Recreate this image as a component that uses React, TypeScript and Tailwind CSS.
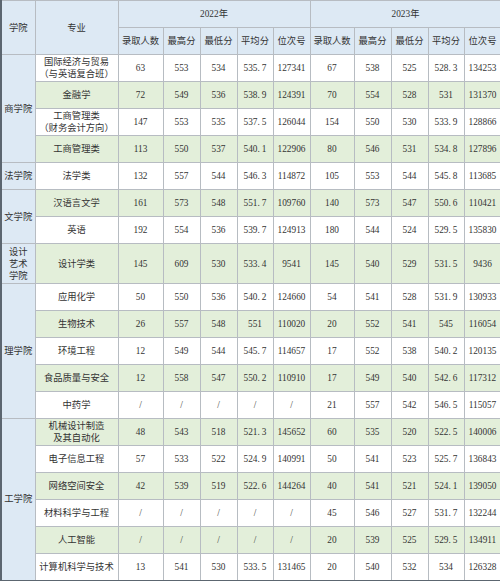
import type { ReactNode } from "react";

type Row = {
  major: ReactNode;
  y22: string[];
  y23: string[];
  green: boolean;
  college?: { label: ReactNode; span: number };
  tall?: boolean;
};

const SLASH = ["/", "/", "/", "/", "/"];

const rows: Row[] = [
  {
    major: (
      <>
        国际经济与贸易
        <br />
        （与英语复合班）
      </>
    ),
    y22: ["63", "553", "534", "535.7", "127341"],
    y23: ["67", "538", "525", "528.3", "134253"],
    green: false,
    college: { label: "商学院", span: 4 },
  },
  {
    major: "金融学",
    y22: ["72", "549", "536", "538.9", "124391"],
    y23: ["70", "554", "528", "531", "131370"],
    green: true,
  },
  {
    major: (
      <>
        工商管理类
        <br />
        （财务会计方向）
      </>
    ),
    y22: ["147", "553", "535", "537.5", "126044"],
    y23: ["154", "550", "530", "533.9", "128866"],
    green: false,
  },
  {
    major: "工商管理类",
    y22: ["113", "550", "537", "540.1", "122906"],
    y23: ["80", "546", "531", "534.8", "127896"],
    green: true,
  },
  {
    major: "法学类",
    y22: ["132", "557", "544", "546.3", "114872"],
    y23: ["105", "553", "544", "545.8", "113685"],
    green: false,
    college: { label: "法学院", span: 1 },
  },
  {
    major: "汉语言文学",
    y22: ["161", "573", "548", "551.7", "109760"],
    y23: ["140", "573", "547", "550.6", "110421"],
    green: true,
    college: { label: "文学院", span: 2 },
  },
  {
    major: "英语",
    y22: ["192", "554", "536", "539.7", "124913"],
    y23: ["180", "544", "524", "529.5", "135830"],
    green: false,
  },
  {
    major: "设计学类",
    y22: ["145", "609", "530", "533.4", "9541"],
    y23: ["145", "540", "529", "531.5", "9436"],
    green: true,
    tall: true,
    college: {
      label: (
        <>
          设计
          <br />
          艺术
          <br />
          学院
        </>
      ),
      span: 1,
    },
  },
  {
    major: "应用化学",
    y22: ["50", "550", "536", "540.2", "124660"],
    y23: ["54", "541", "528", "531.9", "130933"],
    green: false,
    college: { label: "理学院", span: 5 },
  },
  {
    major: "生物技术",
    y22: ["26", "557", "548", "551", "110020"],
    y23: ["20", "552", "541", "545", "116054"],
    green: true,
  },
  {
    major: "环境工程",
    y22: ["12", "549", "544", "545.7", "114657"],
    y23: ["17", "552", "538", "540.2", "120135"],
    green: false,
  },
  {
    major: "食品质量与安全",
    y22: ["12", "558", "547", "550.2", "110910"],
    y23: ["17", "549", "540", "542.6", "117312"],
    green: true,
  },
  {
    major: "中药学",
    y22: SLASH,
    y23: ["21", "557", "542", "546.5", "115057"],
    green: false,
  },
  {
    major: (
      <>
        机械设计制造
        <br />
        及其自动化
      </>
    ),
    y22: ["48", "543", "518", "521.3", "145652"],
    y23: ["60", "535", "520", "522.5", "140006"],
    green: true,
    college: { label: "工学院", span: 6 },
  },
  {
    major: "电子信息工程",
    y22: ["57", "533", "522", "524.9", "140991"],
    y23: ["50", "541", "523", "525.7", "136843"],
    green: false,
  },
  {
    major: "网络空间安全",
    y22: ["42", "539", "519", "522.6", "144264"],
    y23: ["40", "541", "521", "524.1", "139050"],
    green: true,
  },
  {
    major: "材料科学与工程",
    y22: SLASH,
    y23: ["45", "546", "527", "531.7", "132244"],
    green: false,
  },
  {
    major: "人工智能",
    y22: SLASH,
    y23: ["20", "539", "525", "529.5", "134911"],
    green: true,
  },
  {
    major: "计算机科学与技术",
    y22: ["13", "541", "530", "533.5", "131465"],
    y23: ["20", "540", "532", "534", "126328"],
    green: false,
  },
];

const heads = ["录取人数", "最高分", "最低分", "平均分", "位次号"];

// SimSun-style wide decimal point
function Num({ v }: { v: string }) {
  const [a, b] = v.split(".");
  if (b === undefined) return <>{v}</>;
  return (
    <>
      {a}
      <span className="mr-[2px]">.</span>
      {b}
    </>
  );
}

const cell = "border border-[#b7bcc2] text-center align-middle p-0";

export default function App() {
  return (
    <div
      className="w-[500px] bg-white text-[#333333] text-[9.3px] leading-[12px]"
      style={{ fontFamily: '"Liberation Serif", "Noto Sans CJK SC", serif' }}
    >
      <table className="w-[500px] table-fixed border-collapse border-l-2 border-r border-b-2 border-l-[#5c6670] border-r-[#7a8590] border-b-[#5c6670]">
        <colgroup>
          <col className="w-[34px]" />
          <col className="w-[83px]" />
          <col className="w-[45px]" />
          <col className="w-[37px]" />
          <col className="w-[37px]" />
          <col className="w-[36px]" />
          <col className="w-[37px]" />
          <col className="w-[44px]" />
          <col className="w-[37px]" />
          <col className="w-[37px]" />
          <col className="w-[36px]" />
          <col className="w-[37px]" />
        </colgroup>
        <thead className="bg-[#dde9f4]">
          <tr className="h-[27px]">
            <th rowSpan={2} className={`${cell} font-normal`}>
              学院
            </th>
            <th rowSpan={2} className={`${cell} font-normal`}>
              专业
            </th>
            <th colSpan={5} className={`${cell} font-normal`}>
              2022年
            </th>
            <th colSpan={5} className={`${cell} font-normal`}>
              2023年
            </th>
          </tr>
          <tr className="h-[27px]">
            {[...heads, ...heads].map((h, i) => (
              <th key={i} className={`${cell} font-normal`}>
                {h}
              </th>
            ))}
          </tr>
        </thead>
        <tbody>
          {rows.map((r, i) => (
            <tr key={i} className={r.tall ? "h-[40px]" : "h-[27px]"}>
              {r.college && (
                <td rowSpan={r.college.span} className={`${cell} bg-[#dde9f4]`}>
                  {r.college.label}
                </td>
              )}
              <td className={`${cell} ${r.green ? "bg-[#e3efda]" : "bg-white"}`}>
                {r.major}
              </td>
              {[...r.y22, ...r.y23].map((v, j) => (
                <td
                  key={j}
                  className={`${cell} ${r.green ? "bg-[#e3efda]" : "bg-white"}`}
                >
                  <Num v={v} />
                </td>
              ))}
            </tr>
          ))}
        </tbody>
      </table>
    </div>
  );
}
